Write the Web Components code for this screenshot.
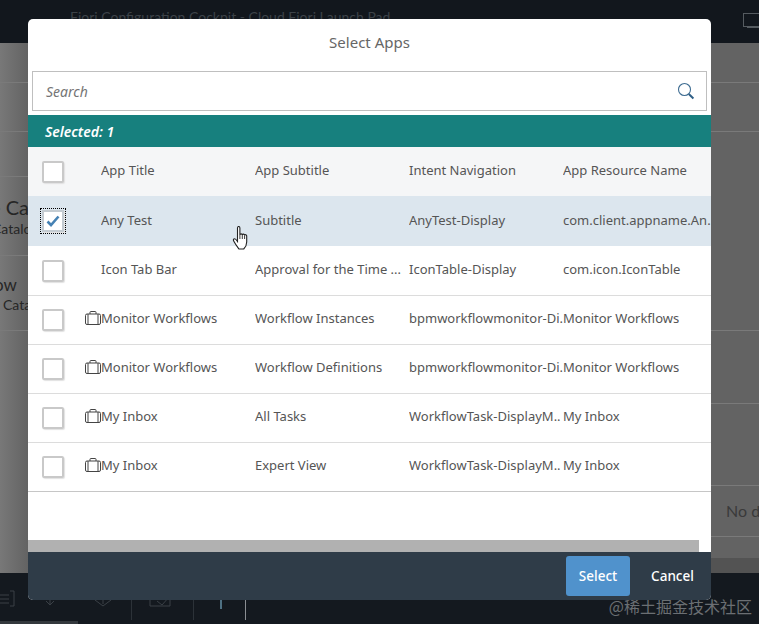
<!DOCTYPE html>
<html>
<head>
<meta charset="utf-8">
<title>Select Apps</title>
<style>
  html, body { margin: 0; height: 100%; overflow: hidden; }
  body { font-family: "Noto Sans", "Open Sans", sans-serif; }
</style>
</head>
<body>
<launchpad-page>
  <select-dialog>
    <app-row slot="rows" header title-text="App Title" subtitle="App Subtitle" intent="Intent Navigation" resource="App Resource Name"></app-row>
    <app-row slot="rows" selected title-text="Any Test" subtitle="Subtitle" intent="AnyTest-Display" resource="com.client.appname.An.."></app-row>
    <app-row slot="rows" second title-text="Icon Tab Bar" subtitle="Approval for the Time ..." intent="IconTable-Display" resource="com.icon.IconTable"></app-row>
    <app-row slot="rows" icon title-text="Monitor Workflows" subtitle="Workflow Instances" intent="bpmworkflowmonitor-Di.." resource="Monitor Workflows"></app-row>
    <app-row slot="rows" icon title-text="Monitor Workflows" subtitle="Workflow Definitions" intent="bpmworkflowmonitor-Di.." resource="Monitor Workflows"></app-row>
    <app-row slot="rows" icon title-text="My Inbox" subtitle="All Tasks" intent="WorkflowTask-DisplayM.." resource="My Inbox"></app-row>
    <app-row slot="rows" icon title-text="My Inbox" subtitle="Expert View" intent="WorkflowTask-DisplayM.." resource="My Inbox"></app-row>
  </select-dialog>
</launchpad-page>

<script>
// page behind the dialog, dimmed
class LaunchpadPage extends HTMLElement {
  constructor() {
    super()
    this.attachShadow({ mode: 'open' })
    this.shadowRoot.innerHTML = `
    <style>
      :host { display: flex; flex-direction: column; width: 759px; height: 624px; position: relative; overflow: hidden; background: #6b6b6b; }
      .top { height: 43px; flex: none; background: #12171d; color: #3c4248; font: 14px Lato, sans-serif; padding: 8px 0 0 70px; box-sizing: border-box; white-space: nowrap; position: relative; }
      .screen { position: absolute; left: 743px; top: 13px; width: 20px; height: 12px; border: 1px solid #555b60; }
      .stand { position: absolute; left: 747px; top: 27px; width: 12px; height: 1px; background: #555b60; }
      .body { flex: 1; background: linear-gradient(90deg, #787878, #636363 28px); position: relative; overflow: hidden; font-family: Lato, sans-serif; }
      .bottom { height: 51px; flex: none; background: #14191f; position: relative; }
      .bottom i { position: absolute; top: 22px; height: 25px; width: 1px; background: #2c3238; }
      .bottom b { position: absolute; left: 0; bottom: 0; width: 78px; height: 3px; background: #33383d; }
      .bottom svg { position: absolute; left: 0; top: 0; }
      .line { height: 1px; background: #7a7a7a; position: absolute; left: 0; right: 0; }
      .band { position: absolute; left: 711px; right: 0; top: 515px; height: 15px; background: #535353; }
      .t { position: absolute; white-space: nowrap; color: #262626; }
      .wm { position: absolute; right: 7px; bottom: 6px; font: 16px "Noto Sans CJK SC", sans-serif; color: #6b6f73; }
    </style>
    <div class="top">Fiori Configuration Cockpit - Cloud Fiori Launch Pad<div class="screen"></div><div class="stand"></div></div>
    <div class="body">
      <div class="line" style="top:39px"></div>
      <div class="line" style="top:88px"></div>
      <div class="line" style="top:133px;right:731px"></div>
      <div class="line" style="top:212px;right:731px"></div>
      <div class="line" style="top:287px"></div>
      <div class="line" style="top:360px;left:711px"></div>
      <div class="line" style="top:442px;left:711px"></div>
      <div class="line" style="top:493px;left:711px"></div>
      <div class="band"></div>
      <div class="t" style="left:-10px;top:152px;font-size:20px">e Ca</div>
      <div class="t" style="left:-8px;top:177px;font-size:14px">Catalog</div>
      <div class="t" style="left:-6px;top:231px;font-size:17px">ow</div>
      <div class="t" style="left:3px;top:253px;font-size:14px">Catalog</div>
      <div class="t" style="left:726px;top:458px;font-size:16px;color:#3a3a3a">No data</div>
    </div>
    <div class="bottom">
      <svg width="240" height="51" fill="none" stroke="#3a4046" stroke-width="1">
        <path d="M0 22h9M0 26h9M0 30h9M10 18h4v15h-4"/>
        <path d="M50 22v9M46 28l4 4 4-4"/>
        <path d="M103 22v9M95 27l8 6 8-6"/>
        <path d="M150 24v9h20v-12M157 28l5 4 7-8"/>
        <path d="M221 26v10" stroke="#4f7183" stroke-width="2"/>
      </svg>
      <i style="left:131px"></i><i style="left:193px"></i><i style="left:245px;background:#8a8e92"></i><b></b>
    </div>
    <div class="wm">@稀土掘金技术社区</div>
    <slot></slot>`
  }
}

class SelectDialog extends HTMLElement {
  constructor() {
    super()
    this.attachShadow({ mode: 'open' })
    this.shadowRoot.innerHTML = `
    <style>
      :host { display: flex; flex-direction: column; position: absolute; left: 28px; top: 19px; width: 683px; height: 581px; background: #fff; border-radius: 5px; overflow: hidden; }
      header { height: 48px; flex: none; box-sizing: border-box; padding-bottom: 2px; display: flex; align-items: center; justify-content: center; font-size: 15px; color: #666; }
      .search { height: 40px; margin: 4px; flex: none; box-sizing: border-box; border: 1px solid #bfbfbf; display: flex; align-items: center; justify-content: space-between; padding: 0 11px 0 13px; font-size: 14px; font-style: italic; color: #757575; }
      .info { height: 32px; flex: none; background: #17807e; color: #fff; display: flex; align-items: center; padding-left: 17px; font-size: 14px; font-weight: 600; font-style: italic; }
      .rows { flex: 1; min-height: 0; overflow: hidden; }
      .scroll { height: 12px; flex: none; margin-right: 12px; background: #b1b1b1; }
      footer { height: 48px; flex: none; background: #2f3c48; display: flex; align-items: center; justify-content: flex-end; gap: 8px; padding: 0 4px 0 0; box-sizing: border-box; font-size: 13.5px; font-weight: 500; }
      footer span { display: flex; align-items: center; justify-content: center; height: 40px; border-radius: 3px; color: #fff; }
      .ok { width: 64px; background: #5092cc; }
      .no { width: 69px; }
    </style>
    <header>Select Apps</header>
    <div class="search">Search
      <svg width="18" height="18" viewBox="0 0 18 18" fill="none">
        <circle cx="7.5" cy="7.5" r="6" stroke="#3f6d92" stroke-width="1.1"/>
        <path d="M11.8 12 16.4 16.5" stroke="#2f5f86" stroke-width="2"/>
      </svg>
    </div>
    <div class="info">Selected: 1</div>
    <div class="rows"><slot name="rows"></slot></div>
    <div class="scroll"></div>
    <footer><span class="ok">Select</span><span class="no">Cancel</span></footer>`
  }
}

const rowTemplate = document.createElement('template')
rowTemplate.innerHTML = `
<style>
  :host { display: block; height: 49px; box-sizing: border-box; border-bottom: 1px solid #dcdcdc; font-size: 13px; color: #555; }
  :host([header]) { background: #f5f6f7; border-bottom: 0; }
  :host([selected]) { background: #dce6ee; height: 50px; border-bottom: 0; }
  :host([second]) { height: 50px; }
  :host(:last-child) { border-bottom-color: #c6c6c6; }
  .row { display: grid; grid-template-columns: 57px 16px 154px 154px 154px 148px; align-items: center; height: 100%; }
  .box { width: 22px; height: 22px; margin-left: 14px; box-sizing: border-box; background: #fff; border: 2px solid #c9c9c9; border-radius: 2px; box-shadow: 1px 1px 1px #e2e2e2; display: flex; align-items: center; justify-content: center; }
  :host([selected]) .box { outline: 1px dotted #000; outline-offset: 1px; border-color: #c4ccd2; border-radius: 0; }
  .ic { display: flex; align-items: center; padding-bottom: 4px; }
  .c { overflow: hidden; white-space: nowrap; padding-bottom: 4px; }
  :host([selected]) .c { padding-bottom: 2px; }
  .title { grid-column: 3; }
  .hand { position: absolute; left: 204px; top: 30px; }
  .wrap { position: relative; height: 100%; }
</style>
<div class="wrap">
<div class="row">
  <div class="box"></div>
  <div class="ic"></div>
  <div class="c title"></div>
  <div class="c sub"></div>
  <div class="c intent"></div>
  <div class="c res"></div>
</div>
</div>`

const CHECK = `<svg width="14" height="12" viewBox="0 0 14 12" fill="none"><path d="M1.500 6.500 5 10 12.500 1.500" stroke="#4682b4" stroke-width="2.600"/></svg>`
const CASE = `<svg width="16" height="14" viewBox="0 0 16 14" fill="none" stroke="#444" stroke-width="1"><rect x="0.5" y="3" width="15" height="10.5" rx="1.5"/><path d="M5 3V1.2C5 .8 5.3.5 5.7.5h4.6c.4 0 .7.3.7.7V3M3 3v10.500M13 3v10.500"/></svg>`
const HAND = `<svg width="17" height="24" viewBox="0 0 16 24"><path d="M5 2c0-2 2.400-2 2.400 0v7c.2-1.600 2.300-1.400 2.400 0 .2-1.300 2.200-1.200 2.300.3.300-1 2-.8 2.100.6v6.100c0 3-1.500 5.500-3 7H6.500C5 21 3 18.500 1.200 15c-.6-1.200-.2-2.200.8-2.200.9 0 2 1.200 3 2.700Z" fill="#fff" stroke="#222" stroke-width="1.100"/><path d="M7.400 9v4M9.800 9v4M12.100 9.300V13" stroke="#222" stroke-width=".9"/></svg>`

class AppRow extends HTMLElement {
  constructor() {
    super()
    this.attachShadow({ mode: 'open' })
    this.shadowRoot.appendChild(rowTemplate.content.cloneNode(true))
  }
  connectedCallback() {
    const s = this.shadowRoot
    s.querySelector('.title').textContent = this.getAttribute('title-text')
    s.querySelector('.sub').textContent = this.getAttribute('subtitle')
    s.querySelector('.intent').textContent = this.getAttribute('intent')
    s.querySelector('.res').textContent = this.getAttribute('resource')
    if (this.hasAttribute('icon')) s.querySelector('.ic').innerHTML = CASE
    if (this.hasAttribute('selected')) {
      s.querySelector('.box').innerHTML = CHECK
      s.querySelector('.wrap').insertAdjacentHTML('beforeend', `<div class="hand">${HAND}</div>`)
    }
  }
}

customElements.define('launchpad-page', LaunchpadPage)
customElements.define('select-dialog', SelectDialog)
customElements.define('app-row', AppRow)
</script>
</body>
</html>
